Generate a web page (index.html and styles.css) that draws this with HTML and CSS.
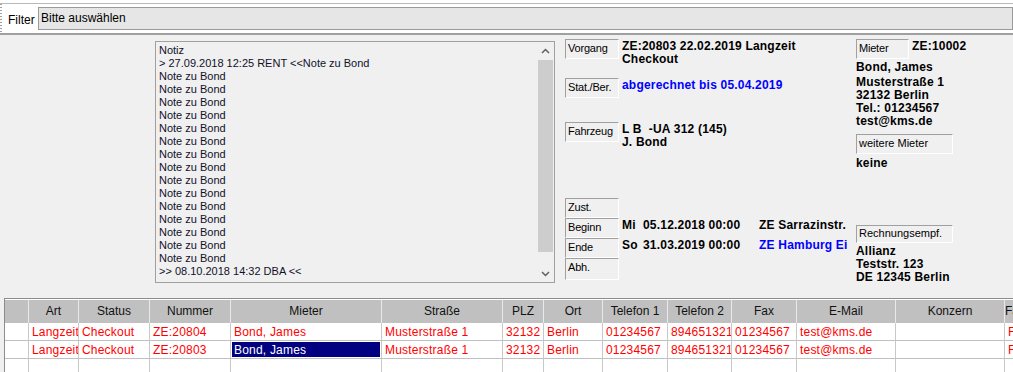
FILE: index.html
```html
<!DOCTYPE html>
<html lang="de">
<head>
    <meta charset="UTF-8">
    <title>Vorgang ZE:20803</title>
    <link rel="stylesheet" href="styles.css">
</head>
<body>
    <div class="filterbar">
        <div class="filterbar-inner">
            <span class="grip"></span>
            <span class="filter-label">Filter</span>
            <div class="filter-input">Bitte auswählen</div>
        </div>
    </div>

    <div class="main">
        <div class="notes">
            <div class="notes-text">
                <div>Notiz</div>
                <div>&gt; 27.09.2018 12:25 RENT &lt;&lt;Note zu Bond</div>
                <div>Note zu Bond</div>
                <div>Note zu Bond</div>
                <div>Note zu Bond</div>
                <div>Note zu Bond</div>
                <div>Note zu Bond</div>
                <div>Note zu Bond</div>
                <div>Note zu Bond</div>
                <div>Note zu Bond</div>
                <div>Note zu Bond</div>
                <div>Note zu Bond</div>
                <div>Note zu Bond</div>
                <div>Note zu Bond</div>
                <div>Note zu Bond</div>
                <div>Note zu Bond</div>
                <div>Note zu Bond</div>
                <div>&gt;&gt; 08.10.2018 14:32 DBA &lt;&lt;</div>
            </div>
            <div class="scrollbar">
                <div class="sb-btn">
                    <svg width="9" height="6" viewBox="0 0 9 6"><path d="M1 5 L4.5 1.5 L8 5" fill="none" stroke="#606060" stroke-width="1.5"/></svg>
                </div>
                <div class="sb-track"><div class="sb-thumb"></div></div>
                <div class="sb-btn">
                    <svg width="9" height="6" viewBox="0 0 9 6"><path d="M1 1 L4.5 4.5 L8 1" fill="none" stroke="#606060" stroke-width="1.5"/></svg>
                </div>
            </div>
        </div>

        <div class="details">
            <div class="row row-vorgang">
                <div class="field-label">Vorgang</div>
                <div class="value">ZE:20803 22.02.2019 Langzeit<br>Checkout</div>
            </div>
            <div class="row row-status">
                <div class="field-label">Stat./Ber.</div>
                <div class="value blue">abgerechnet bis 05.04.2019</div>
            </div>
            <div class="row row-fahrzeug">
                <div class="field-label">Fahrzeug</div>
                <div class="value pre">L B  -UA 312 (145)<br>J. Bond</div>
            </div>
            <div class="row row-zust">
                <div class="field-label">Zust.</div>
            </div>
            <div class="row">
                <div class="field-label">Beginn</div>
                <div class="value"><span class="weekday">Mi</span><span class="date">05.12.2018 00:00</span>ZE Sarrazinstr.</div>
            </div>
            <div class="row">
                <div class="field-label">Ende</div>
                <div class="value"><span class="weekday">So</span><span class="date">31.03.2019 00:00</span><span class="blue">ZE Hamburg Ei</span></div>
            </div>
            <div class="row row-abh">
                <div class="field-label">Abh.</div>
            </div>
        </div>

        <div class="tenant">
            <div class="row">
                <div class="field-label short">Mieter</div>
                <div class="value">ZE:10002</div>
            </div>
            <div class="text-block name">Bond, James</div>
            <div class="text-block address">Musterstraße 1<br>32132 Berlin<br>Tel.: 01234567<br>test@kms.de</div>
            <div class="field-label wide more">weitere Mieter</div>
            <div class="text-block keine">keine</div>
            <div class="field-label wide invoice">Rechnungsempf.</div>
            <div class="text-block invoice-address">Allianz<br>Teststr. 123<br>DE 12345 Berlin</div>
        </div>
    </div>

    <div class="grid-wrap">
        <table class="grid">
            <colgroup>
                <col class="c-head">
                <col class="c-art">
                <col class="c-status">
                <col class="c-nummer">
                <col class="c-mieter">
                <col class="c-strasse">
                <col class="c-plz">
                <col class="c-ort">
                <col class="c-tel">
                <col class="c-tel2">
                <col class="c-fax">
                <col class="c-mail">
                <col class="c-konzern">
                <col class="c-fa">
            </colgroup>
            <thead>
                <tr>
                    <th></th>
                    <th>Art</th>
                    <th>Status</th>
                    <th>Nummer</th>
                    <th>Mieter</th>
                    <th>Straße</th>
                    <th>PLZ</th>
                    <th>Ort</th>
                    <th>Telefon 1</th>
                    <th>Telefon 2</th>
                    <th>Fax</th>
                    <th>E-Mail</th>
                    <th>Konzern</th>
                    <th class="left">Fa</th>
                </tr>
            </thead>
            <tbody>
                <tr>
                    <td></td>
                    <td>Langzeit</td>
                    <td>Checkout</td>
                    <td>ZE:20804</td>
                    <td>Bond, James</td>
                    <td>Musterstraße 1</td>
                    <td>32132</td>
                    <td>Berlin</td>
                    <td>01234567</td>
                    <td>894651321</td>
                    <td>01234567</td>
                    <td>test@kms.de</td>
                    <td></td>
                    <td>F</td>
                </tr>
                <tr>
                    <td></td>
                    <td>Langzeit</td>
                    <td>Checkout</td>
                    <td>ZE:20803</td>
                    <td class="selected">Bond, James</td>
                    <td>Musterstraße 1</td>
                    <td>32132</td>
                    <td>Berlin</td>
                    <td>01234567</td>
                    <td>894651321</td>
                    <td>01234567</td>
                    <td>test@kms.de</td>
                    <td></td>
                    <td>F</td>
                </tr>
                <tr>
                    <td></td><td></td><td></td><td></td><td></td><td></td><td></td>
                    <td></td><td></td><td></td><td></td><td></td><td></td><td></td>
                </tr>
            </tbody>
        </table>
    </div>
</body>
</html>
```

FILE: styles.css
```css
body {
    margin: 0;
    background: #f0f0f0;
    font-family: "Liberation Sans", Arial, sans-serif;
    font-size: 11px;
    color: #000;
    overflow: hidden;
}

/* filter bar */
.filterbar {
    height: 35px;
    padding-top: 3px;
    box-sizing: border-box;
    background: #fff;
    border-bottom: 2px solid #a0a0a0;
}
.filterbar-inner {
    display: flex;
    align-items: flex-start;
    height: 30px;
    border-top: 1px solid #b9b9b9;
}
.grip {
    width: 2px;
    height: 29px;
    background: repeating-linear-gradient(to bottom, #a0a0a0 0, #a0a0a0 1px, transparent 1px, transparent 3px);
}
.filter-label {
    margin-left: 6px;
    margin-top: 9px;
    font-size: 12px;
    line-height: 14px;
    width: 30px;
}
.filter-input {
    flex: 1;
    height: 23px;
    margin-top: 3px;
    box-sizing: border-box;
    border: 1px solid #9a9a9a;
    background: #e6e6e6;
    padding: 3px 0 0 2px;
    font-size: 12px;
    line-height: 15px;
}

/* main area */
.main {
    display: flex;
    align-items: flex-start;
    height: 248px;
    padding: 4px 0 0 155px;
    box-sizing: border-box;
}

.notes {
    display: flex;
    width: 400px;
    height: 242px;
    margin-top: 2px;
    box-sizing: border-box;
    border: 1px solid #a0a0a0;
}
.notes-text {
    flex: 1;
    padding: 2px 0 0 3px;
    line-height: 13px;
    color: #10102a;
    overflow: hidden;
}
.scrollbar {
    width: 17px;
    display: flex;
    flex-direction: column;
    background: #f0f0f0;
}
.sb-btn {
    height: 17px;
    display: flex;
    align-items: center;
    justify-content: center;
}
.sb-track {
    flex: 1;
    padding: 1px 1px 0 1px;
}
.sb-thumb {
    height: 192px;
    background: #cdcdcd;
}

/* field labels */
.field-label {
    width: 54px;
    height: 20px;
    box-sizing: border-box;
    border-top: 1px solid #a0a0a0;
    border-left: 1px solid #a0a0a0;
    border-bottom: 1px solid #fff;
    border-right: 1px solid #fff;
    padding-left: 2px;
    line-height: 17px;
    white-space: nowrap;
    overflow: hidden;
    letter-spacing: -0.2px;
    flex-shrink: 0;
}
.field-label.short {
    width: 53px;
}
.field-label.wide {
    width: 97px;
    letter-spacing: 0;
}

.row {
    display: flex;
    align-items: flex-start;
}
.value {
    margin-left: 3px;
    padding-top: 1px;
    font-size: 12px;
    font-weight: bold;
    line-height: 13px;
    letter-spacing: 0.2px;
    white-space: nowrap;
}
.pre {
    white-space: pre;
}
.blue {
    color: #0000ff;
}
.weekday {
    display: inline-block;
    width: 21px;
}
.date {
    display: inline-block;
    width: 116px;
}

/* details column */
.details {
    width: 291px;
    margin-left: 10px;
}
.row-status {
    margin-top: 12px;
}
.row-fahrzeug {
    margin-top: 24px;
}
.row-zust {
    margin-top: 49px;
}
.row-abh .field-label {
    height: 22px;
}

/* tenant column */
.tenant {
    width: 157px;
}
.text-block {
    font-size: 12px;
    font-weight: bold;
    line-height: 13px;
    letter-spacing: 0.2px;
    white-space: nowrap;
}
.name {
    margin-top: 2px;
}
.address {
    margin-top: 2px;
}
.more {
    margin-top: 6px;
}
.keine {
    margin-top: 3px;
}
.invoice {
    margin-top: 55px;
    height: 18px;
    line-height: 15px;
}
.invoice-address {
    margin-top: 2px;
}

/* grid */
.grid-wrap {
    margin: 15px 0 0 4px;
    border-top: 1px solid #8c8c8c;
    border-left: 1px solid #8c8c8c;
    padding-top: 1px;
    background: #fff;
    overflow: hidden;
    height: 72px;
}
.grid {
    width: 1059px;
    table-layout: fixed;
    border-collapse: separate;
    border-spacing: 0;
    font-size: 12px;
}
.c-head { width: 23px; }
.c-art { width: 50px; }
.c-status { width: 71px; }
.c-nummer { width: 81px; }
.c-mieter { width: 151px; }
.c-strasse { width: 121px; }
.c-plz { width: 41px; }
.c-ort { width: 59px; }
.c-tel { width: 65px; }
.c-tel2 { width: 64px; }
.c-fax { width: 65px; }
.c-mail { width: 99px; }
.c-konzern { width: 109px; }
.c-fa { width: 60px; }

.grid th,
.grid td {
    box-sizing: border-box;
    overflow: hidden;
    white-space: nowrap;
    padding: 0;
}
.grid th {
    height: 23px;
    background: #c0c0c0;
    border-left: 1px solid #e9e9e9;
    font-weight: normal;
    color: #111;
    text-align: center;
    line-height: 21px;
}
.grid th:first-child {
    border-left: none;
}
.grid th.left {
    text-align: left;
}
.grid td {
    height: 18px;
    border-left: 1px solid #c8c8c8;
    border-bottom: 1px solid #c0c0c0;
    padding-left: 3px;
    color: #ff0000;
    line-height: 16px;
    letter-spacing: 0.2px;
}
.grid td:first-child {
    border-left: none;
}
.grid td.selected {
    background: #000080;
    color: #fff;
    box-shadow: inset 0 0 0 1px #fff;
}
```
